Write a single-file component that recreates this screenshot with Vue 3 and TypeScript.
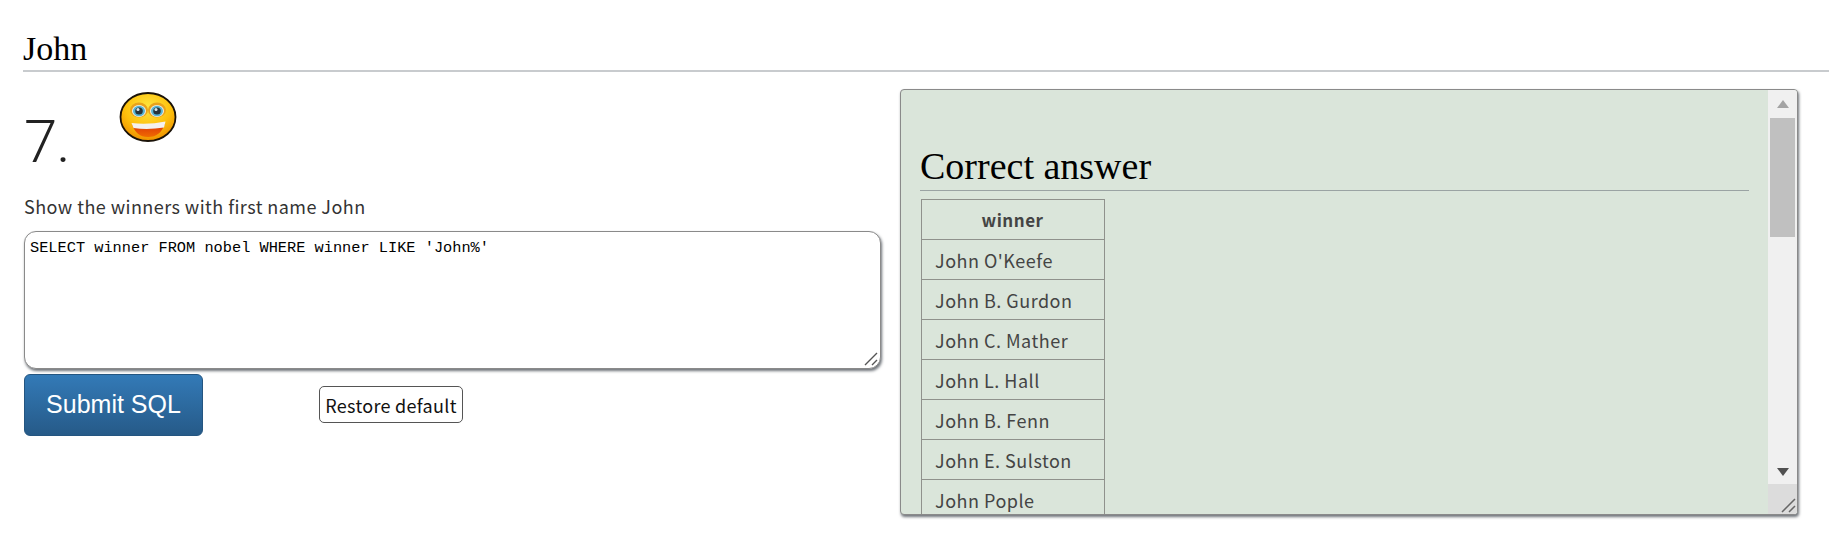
<script setup lang="ts">
import { ref } from 'vue';

const sql = ref("SELECT winner FROM nobel WHERE winner LIKE 'John%'");

const winners = [
  "John O'Keefe",
  'John B. Gurdon',
  'John C. Mather',
  'John L. Hall',
  'John B. Fenn',
  'John E. Sulston',
  'John Pople',
];
</script>

<template>
  <div class="page">
    <h2 class="topic">John</h2>
    <div class="columns">
      <div class="question">
        <div class="title-row">
          <h1 class="number">7.</h1>
          <svg class="smiley" viewBox="0 0 58 50" width="58" height="50">
            <defs>
              <radialGradient id="face" cx="50%" cy="30%" r="70%">
                <stop offset="0" stop-color="#ffe640" />
                <stop offset="0.6" stop-color="#fdc00c" />
                <stop offset="1" stop-color="#ee8f00" />
              </radialGradient>
              <linearGradient id="mouth" x1="0" y1="0" x2="0" y2="1">
                <stop offset="0" stop-color="#d8300c" />
                <stop offset="1" stop-color="#f06a00" />
              </linearGradient>
            </defs>
            <ellipse cx="29" cy="25" rx="27.5" ry="24" fill="url(#face)" stroke="#1a1208" stroke-width="1.8" />
            <ellipse cx="20" cy="18" rx="9" ry="7.5" fill="#e9a21b" />
            <ellipse cx="38" cy="18" rx="9" ry="7.5" fill="#e9a21b" />
            <ellipse cx="20" cy="19" rx="7" ry="6" fill="#f2efe6" />
            <ellipse cx="38" cy="19" rx="7" ry="6" fill="#f2efe6" />
            <ellipse cx="20" cy="19" rx="6" ry="5.2" fill="#58b4d2" />
            <ellipse cx="38" cy="19" rx="6" ry="5.2" fill="#58b4d2" />
            <ellipse cx="20" cy="19" rx="3.8" ry="3.6" fill="#27343c" />
            <ellipse cx="38" cy="19" rx="3.8" ry="3.6" fill="#27343c" />
            <circle cx="19" cy="17.5" r="1.5" fill="#d8e8f0" />
            <circle cx="37" cy="17.5" r="1.5" fill="#d8e8f0" />
            <path d="M13 32 Q29 36 46 31 Q42 45 29 45 Q17 45 13 32 Z" fill="url(#mouth)" />
            <path d="M12.5 31 Q29 33 46.5 29.5 L45 35.5 Q29 38 14.5 36 Z" fill="#f4f1ee" />
          </svg>
        </div>
        <p class="prompt">Show the winners with first name John</p>
        <div class="editor">
          <textarea v-model="sql" class="sql" spellcheck="false"></textarea>
          <svg class="grip" viewBox="0 0 14 14" width="14" height="14">
            <path d="M1 13 L13 1 M8 13 L13 8" stroke="#555" stroke-width="1.4" fill="none" />
          </svg>
        </div>
        <div class="actions">
          <button class="submit" type="button">Submit SQL</button>
          <button class="restore" type="button">Restore default</button>
        </div>
      </div>

      <div class="answer-box">
        <div class="answer-body">
          <h2 class="answer-title">Correct answer</h2>
          <table class="results">
            <thead>
              <tr><th>winner</th></tr>
            </thead>
            <tbody>
              <tr v-for="name in winners" :key="name">
                <td>{{ name }}</td>
              </tr>
            </tbody>
          </table>
        </div>
        <div class="scrollbar">
          <div class="arrow-btn">
            <svg viewBox="0 0 12 8" width="12" height="8"><path d="M6 0 L12 8 L0 8 Z" fill="#a3a3a3" /></svg>
          </div>
          <div class="track">
            <div class="thumb"></div>
          </div>
          <div class="arrow-btn arrow-down">
            <svg viewBox="0 0 12 8" width="12" height="8"><path d="M0 0 L12 0 L6 8 Z" fill="#505050" /></svg>
          </div>
          <div class="corner">
            <svg viewBox="0 0 16 16" width="16" height="16">
              <path d="M2 15 L15 2 M9 15 L15 9" stroke="#666" stroke-width="1.5" fill="none" />
            </svg>
          </div>
        </div>
      </div>
    </div>
  </div>
</template>

<style>
html,
body {
  margin: 0;
  background: #fff;
  overflow: hidden;
}
</style>

<style scoped>
.page {
  height: 547px;
  overflow: hidden;
  padding-left: 23px;
  box-sizing: border-box;
}

.topic {
  margin: 0;
  height: 72px;
  box-sizing: border-box;
  padding-top: 30px;
  border-bottom: 2px solid #c8cbce;
  font: 400 34px/1.1 'Liberation Serif', serif;
  color: #000;
}

.columns {
  display: flex;
  align-items: flex-start;
  margin-top: 17px;
}

.question {
  width: 858px;
  flex: none;
  padding-left: 1px;
  box-sizing: border-box;
}

.title-row {
  display: flex;
  align-items: flex-start;
  height: 104px;
}

.number {
  margin: 20px 0 0;
  font: 300 60px/1.1 Roboto, sans-serif;
  letter-spacing: -1px;
  color: #222;
}

.smiley {
  margin: 3px 0 0 49px;
}

.prompt {
  margin: 0;
  height: 38px;
  font: 400 18px/26px 'Noto Sans CJK KR', sans-serif;
  letter-spacing: 0.44px;
  color: #333;
}

.editor {
  position: relative;
  height: 138px;
}

.sql {
  display: block;
  width: 100%;
  height: 100%;
  box-sizing: border-box;
  resize: none;
  outline: none;
  padding: 7px 5px;
  border: 1px solid #8a8a8a;
  border-radius: 12px;
  box-shadow: 1px 2px 3px #6d7278;
  font: 400 15.3px/19px 'Liberation Mono', monospace;
  color: #000;
  background: #fff;
}

.grip {
  position: absolute;
  right: 3px;
  bottom: 3px;
}

.actions {
  display: flex;
  align-items: flex-start;
  margin-top: 5px;
}

.submit {
  width: 179px;
  height: 62px;
  padding: 0 0 2px;
  border: 1px solid #245580;
  border-radius: 6px;
  background: linear-gradient(#337ab7, #265a88);
  color: #fff;
  font: 400 25px 'Liberation Sans', sans-serif;
}

.restore {
  width: 144px;
  height: 37px;
  margin: 12px 0 0 116px;
  padding: 0;
  background: #fff;
  border: 1px solid #555;
  border-radius: 5px;
  color: #111;
  font: 400 18px 'Noto Sans CJK KR', sans-serif;
  letter-spacing: 0.3px;
}

.answer-box {
  display: flex;
  width: 898px;
  height: 426px;
  margin-left: 19px;
  box-sizing: border-box;
  border: 1px solid #8a8a8a;
  border-radius: 4px;
  box-shadow: 1px 2px 3px #6d7278;
  background: #dae5da;
  overflow: hidden;
}

.answer-body {
  flex: 1;
  min-width: 0;
  overflow: hidden;
  padding: 56px 19px 0 19px;
}

.answer-title {
  margin: 0 0 8px;
  padding-bottom: 2.5px;
  border-bottom: 1px solid #9aa3a3;
  font: 400 38px/1.1 'Liberation Serif', serif;
  color: #000;
}

.results {
  border-collapse: collapse;
  width: 184px;
  margin-left: 1px;
  font: 400 18px 'Noto Sans CJK KR', sans-serif;
  letter-spacing: 0.5px;
  color: #444;
}

.results th,
.results td {
  height: 40px;
  box-sizing: border-box;
  padding: 0 14px 0 13px;
  border: 1.5px solid #8f918c;
}

.results th {
  font-weight: 700;
  font-size: 17px;
  text-align: center;
}

.results td {
  text-align: left;
}

.scrollbar {
  position: relative;
  flex: none;
  width: 29px;
  display: flex;
  flex-direction: column;
  background: #f0f0f0;
}

.arrow-btn {
  flex: none;
  height: 28px;
  display: flex;
  align-items: center;
  justify-content: center;
}

.track {
  flex: 1;
  padding: 0 2px;
}

.thumb {
  height: 119px;
  background: #c0c0c0;
}

.arrow-down {
  margin-bottom: 28px;
}

.corner {
  position: absolute;
  left: 0;
  right: 0;
  bottom: 0;
  height: 30px;
  background: #dcdcdc;
}

.corner svg {
  position: absolute;
  right: 1px;
  bottom: 1px;
}
</style>
